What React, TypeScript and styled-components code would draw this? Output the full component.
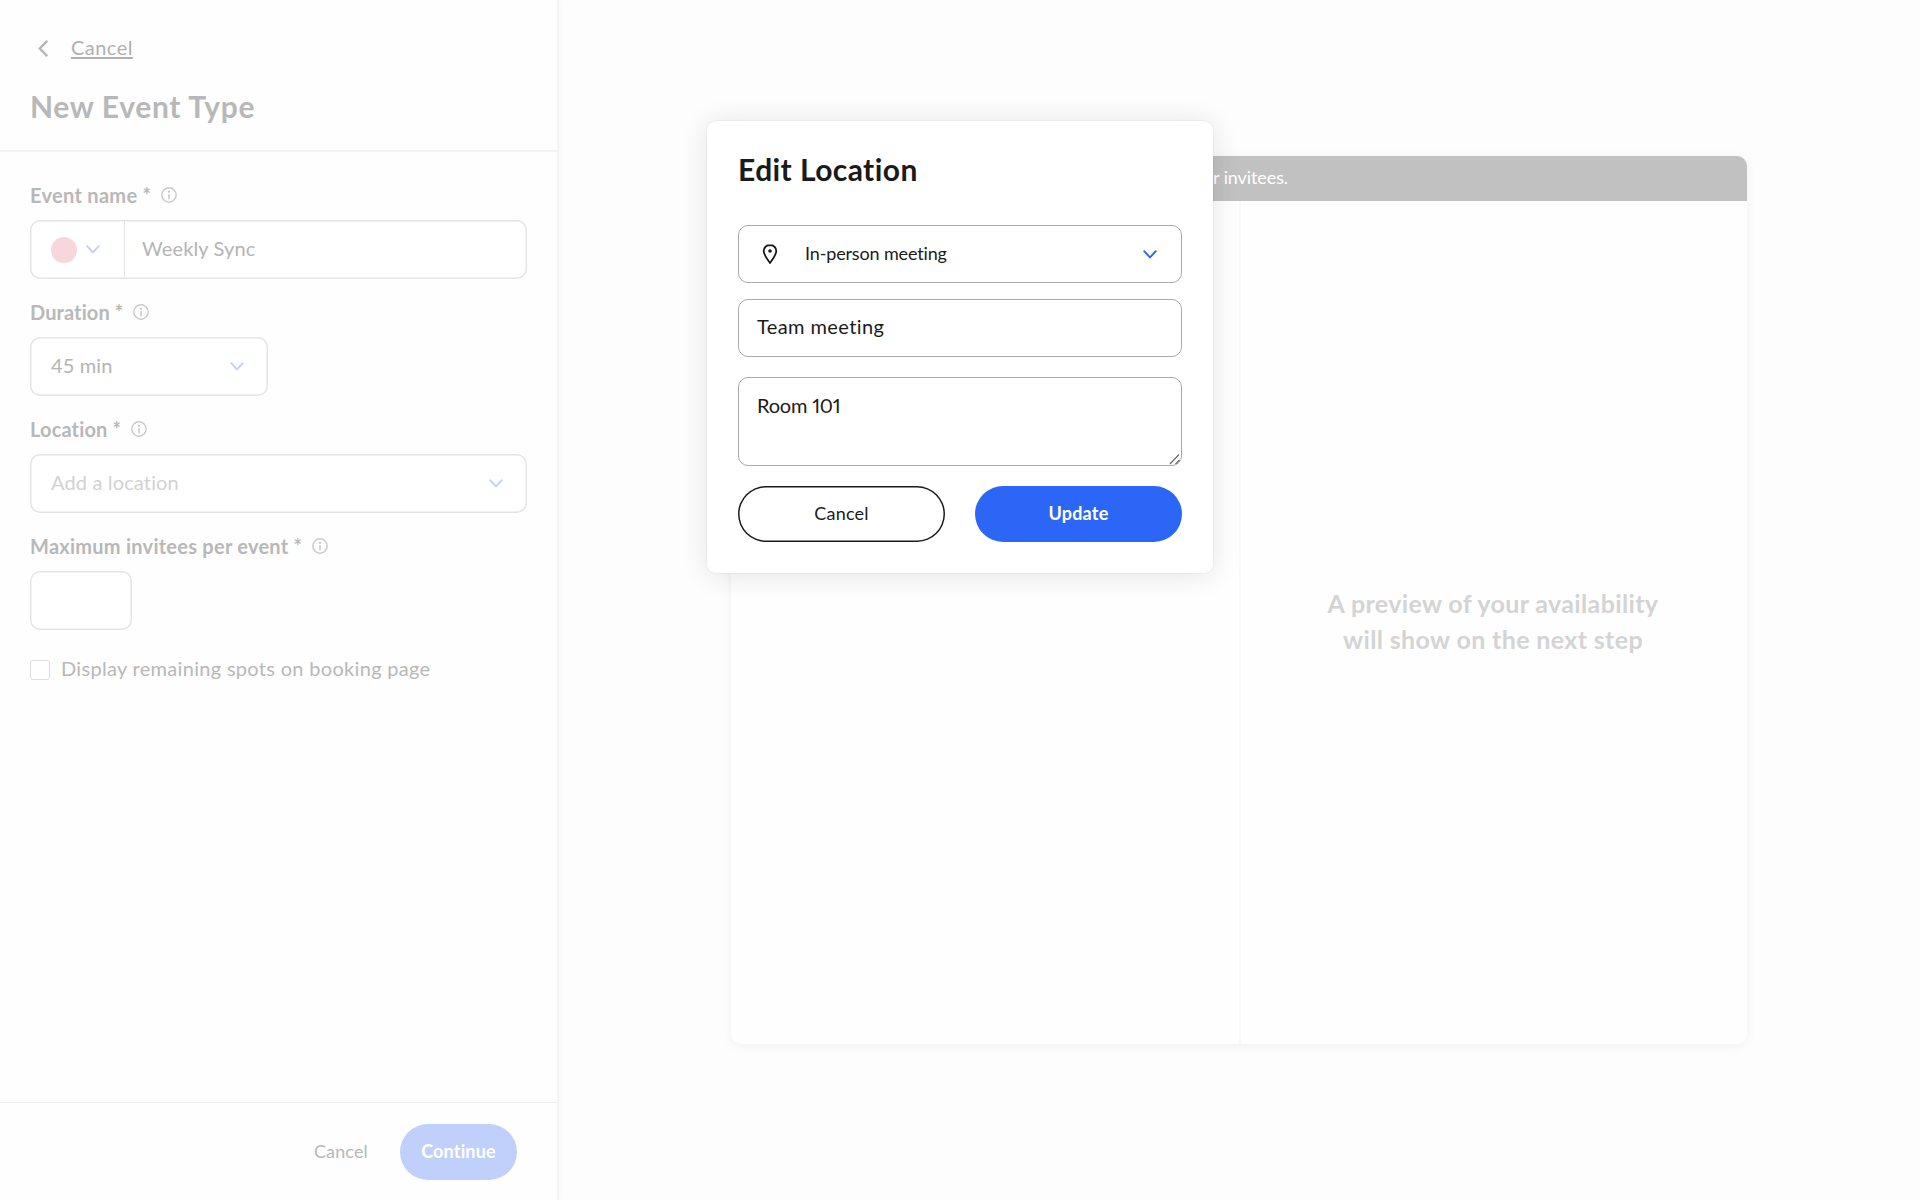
import React from 'react'
import styled, { createGlobalStyle, ThemeProvider } from 'styled-components'

const theme = {
  colors: {
    text: '#1a1a1a',
    primary: '#2b66f6',
    primaryFaded: '#c1cffb',
    faded: '#b8b8b8',
    fadedBorder: '#e4e4e4',
    line: '#f3f3f3',
    border: '#a9a9a9',
    canvas: '#fdfdfd',
  },
  radius: '10px',
}

const GlobalStyle = createGlobalStyle`
  * {
    box-sizing: border-box;
  }

  body {
    margin: 0;
    background: ${theme.colors.canvas};
    font-family: Lato, 'Open Sans', sans-serif;
    font-size: 20px;
    line-height: 24px;
    color: ${theme.colors.text};
    overflow: hidden;
  }
`

const Page = styled.div`
  position: relative;
  display: flex;
  width: 1920px;
  height: 1200px;
  overflow: hidden;
`

/* ---------- sidebar ---------- */

const Sidebar = styled.aside`
  display: flex;
  flex-direction: column;
  width: 559px;
  flex: none;
  background: #fefefe;
  border-right: 2px solid #f3f3f3;
  box-shadow: 3px 0 5px rgba(0, 0, 0, 0.02);
  color: ${(props) => props.theme.colors.faded};
`

const SidebarHeader = styled.header`
  height: 152px;
  padding: 35px 30px 0;
  border-bottom: 2px solid ${(props) => props.theme.colors.line};
`

const BackRow = styled.div`
  display: flex;
  align-items: center;
  gap: 23px;
  padding-left: 8px;
`

const BackLink = styled.a`
  color: #b0b0b0;
  letter-spacing: 0.45px;
  text-decoration: underline;
  text-decoration-thickness: 1.5px;
  text-underline-offset: 2px;
`

const Title = styled.h1`
  margin: 29px 0 0;
  font-size: 30px;
  line-height: 36px;
  font-weight: 700;
  letter-spacing: 0.66px;
`

const Form = styled.form`
  flex: 1;
  padding: 31px 30px 0;
`

const Field = styled.div`
  margin-bottom: 20px;
`

const LabelRow = styled.div`
  display: flex;
  align-items: center;
  height: 24px;
  margin-bottom: 13px;
  padding-bottom: 0;
`

const Label = styled.label<{ $spacing?: number }>`
  font-weight: 700;
  letter-spacing: ${(props) => props.$spacing ?? 0.3}px;
  margin-right: 10px;
  white-space: nowrap;
`

const FormBox = styled.div<{ $width?: number }>`
  display: flex;
  align-items: center;
  width: ${(props) => props.$width ?? 497}px;
  height: 59px;
  margin-bottom: 21px;
  border-radius: ${(props) => props.theme.radius};
  background: #fff;
  box-shadow: inset 0 0 0 1.5px ${(props) => props.theme.colors.fadedBorder};
`

const ColorPicker = styled.div`
  display: flex;
  align-items: center;
  gap: 9px;
  width: 95px;
  height: 100%;
  padding-left: 21px;
  border-right: 1px solid ${(props) => props.theme.colors.fadedBorder};
`

const ColorDot = styled.span`
  width: 26px;
  height: 26px;
  border-radius: 50%;
  background: #f9d5dc;
`

const FormValue = styled.span<{ $placeholder?: boolean; $indent: number }>`
  flex: 1;
  padding-left: ${(props) => props.$indent}px;
  padding-bottom: 3px;
  letter-spacing: 0.15px;
  color: ${(props) => (props.$placeholder ? '#d2d2d2' : '#b4b4b4')};
`

const ChevronSlot = styled.span<{ $right: number }>`
  display: flex;
  margin-right: ${(props) => props.$right}px;
`

const CheckRow = styled.label`
  display: flex;
  align-items: center;
  gap: 11px;
  padding-top: 5px;
  letter-spacing: 0.31px;
`

const CheckBox = styled.span`
  width: 20px;
  height: 20px;
  margin-top: 3px;
  border: 1px solid #dedede;
  border-radius: 3px;
  background: #fff;
`

const SidebarFooter = styled.footer`
  display: flex;
  align-items: center;
  justify-content: flex-end;
  gap: 32px;
  height: 98px;
  padding: 0 40px 0 0;
  border-top: 1px solid #ededed;
  font-size: 18px;
`

const FooterCancel = styled.span`
  padding-bottom: 2px;
  letter-spacing: 0.15px;
`

const ContinueButton = styled.button`
  width: 117px;
  height: 56px;
  padding: 0 0 2px;
  border: 0;
  border-radius: 28px;
  background: ${(props) => props.theme.colors.primaryFaded};
  color: #fff;
  font: 700 18px/24px Lato, sans-serif;
  letter-spacing: 0.15px;
`

/* ---------- preview ---------- */

const Main = styled.main`
  flex: 1;
  padding: 156px 0 0 172px;
`

const PreviewCard = styled.section`
  display: flex;
  flex-direction: column;
  width: 1016px;
  height: 888px;
  border-radius: ${(props) => props.theme.radius};
  background: #fefefe;
  box-shadow: 0 2px 12px rgba(0, 0, 0, 0.05);
  overflow: hidden;
`

const Banner = styled.div`
  display: flex;
  justify-content: flex-end;
  height: 45px;
  padding: 9px 459px 0 0;
  background: #c1c1c1;
  color: #fff;
  font-size: 18px;
  letter-spacing: -0.1px;
`

const PreviewBody = styled.div`
  flex: 1;
  display: grid;
  grid-template-columns: 508px 1fr;
`

const AvailabilityPane = styled.div`
  grid-column: 2;
  border-left: 2px solid #f9f9f9;
  padding: 384px 2px 0 0;
  text-align: center;
  font-size: 25px;
  line-height: 36px;
  font-weight: 700;
  letter-spacing: 0.36px;
  color: #d4d4d4;
`

/* ---------- modal ---------- */

const Modal = styled.div`
  position: absolute;
  top: 121px;
  left: 707px;
  width: 506px;
  height: 452px;
  padding: 30px 31px 0;
  border-radius: 9px;
  background: #fff;
  box-shadow:
    0 0 1px 1px rgba(0, 0, 0, 0.03),
    0 2px 28px rgba(0, 0, 0, 0.11);
`

const ModalTitle = styled.h2`
  margin: 0 0 38px;
  font-size: 30px;
  line-height: 36px;
  font-weight: 700;
  letter-spacing: 0.42px;
`

const ModalBox = styled.div<{ $mb: number }>`
  display: flex;
  align-items: center;
  width: 444px;
  height: 58px;
  margin-bottom: ${(props) => props.$mb}px;
  border: 1px solid ${(props) => props.theme.colors.border};
  border-radius: ${(props) => props.theme.radius};
`

const PinSlot = styled.span`
  display: flex;
  width: 66px;
  padding-left: 23px;
`

const SelectText = styled.span`
  flex: 1;
  padding-bottom: 3px;
  font-size: 18px;
  letter-spacing: -0.15px;
`

const InputText = styled.span`
  padding: 0 0 4px 18px;
  letter-spacing: 0.4px;
`

const NoteArea = styled.div`
  position: relative;
  width: 444px;
  height: 89px;
  margin-bottom: 20px;
  padding: 15px 18px;
  border: 1px solid ${(props) => props.theme.colors.border};
  border-radius: ${(props) => props.theme.radius};
  font-variant-numeric: proportional-nums;
  letter-spacing: -0.2px;
`

const Grip = styled.svg`
  position: absolute;
  right: 0;
  bottom: 0;
`

const Actions = styled.div`
  display: grid;
  grid-template-columns: 1fr 1fr;
  gap: 30px;
  width: 444px;
`

const ActionButton = styled.button<{ $primary?: boolean }>`
  height: 56px;
  padding: 0 0 2px;
  border: 0;
  border-radius: 28px;
  background: ${(props) => (props.$primary ? props.theme.colors.primary : '#fff')};
  box-shadow: ${(props) =>
    props.$primary ? 'none' : `inset 0 0 0 1.5px ${props.theme.colors.text}`};
  color: ${(props) => (props.$primary ? '#fff' : props.theme.colors.text)};
  font: ${(props) => (props.$primary ? 700 : 400)} 18px/24px Lato, sans-serif;
  letter-spacing: 0.2px;
`

interface ChevronProps {
  color: string
}

const Chevron: React.FC<ChevronProps> = ({ color }) => (
  <svg width="14" height="9" viewBox="0 0 14 9" fill="none" aria-hidden="true">
    <path
      d="M1.2 1.2 7 7.4l5.800-6.200"
      stroke={color}
      strokeWidth="1.9"
      strokeLinecap="round"
      strokeLinejoin="round"
    />
  </svg>
)

const BackIcon = () => (
  <svg width="10" height="20" viewBox="0 0 10 20" fill="none" aria-hidden="true">
    <path d="M9.200 3.800 1.700 11.500l7.500 7.700" stroke="#b5b5b5" strokeWidth="2.3" />
  </svg>
)

const InfoIcon = () => (
  <svg width="16" height="16" viewBox="0 0 16 16" fill="none" aria-hidden="true">
    <circle cx="8" cy="8" r="7.200" stroke="#cbcbcb" strokeWidth="1.500" />
    <circle cx="8" cy="4.800" r="1.100" fill="#c4c4c4" />
    <path d="M8 7.200v5" stroke="#c4c4c4" strokeWidth="1.500" />
  </svg>
)

const PinIcon = () => (
  <svg width="16" height="22" viewBox="0 0 16 22" fill="none" aria-hidden="true">
    <path
      d="M8 2c-3.600 0-6.300 2.600-6.300 6.100 0 3.700 4.200 9 6.300 12 2.100-3 6.300-8.300 6.300-12C14.300 4.600 11.600 2 8 2Z"
      stroke="#1a1a1a"
      strokeWidth="1.8"
      strokeLinejoin="round"
    />
    <circle cx="8" cy="8" r="1.8" fill="#1a1a1a" />
  </svg>
)

interface FormLabelProps {
  text: string
  spacing?: number
}

const FormLabel: React.FC<FormLabelProps> = ({ text, spacing }) => (
  <LabelRow>
    <Label $spacing={spacing}>{text} *</Label>
    <InfoIcon />
  </LabelRow>
)

const EventSidebar = () => (
  <Sidebar>
    <SidebarHeader>
      <BackRow>
        <BackIcon />
        <BackLink>Cancel</BackLink>
      </BackRow>
      <Title>New Event Type</Title>
    </SidebarHeader>

    <Form>
      <Field>
        <FormLabel text="Event name" />
        <FormBox>
          <ColorPicker>
            <ColorDot />
            <Chevron color={theme.colors.primaryFaded} />
          </ColorPicker>
          <FormValue $indent={17}>Weekly Sync</FormValue>
        </FormBox>
      </Field>
      <Field>
        <FormLabel text="Duration" spacing={0.1} />
        <FormBox $width={238}>
          <FormValue $indent={21}>45 min</FormValue>
          <ChevronSlot $right={24}>
            <Chevron color={theme.colors.primaryFaded} />
          </ChevronSlot>
        </FormBox>
      </Field>
      <Field>
        <FormLabel text="Location" spacing={0.15} />
        <FormBox>
          <FormValue $indent={21} $placeholder>
            Add a location
          </FormValue>
          <ChevronSlot $right={24}>
            <Chevron color={theme.colors.primaryFaded} />
          </ChevronSlot>
        </FormBox>
      </Field>
      <Field>
        <FormLabel text="Maximum invitees per event" spacing={0.25} />
        <FormBox $width={102} />
      </Field>
      <CheckRow>
        <CheckBox />
        Display remaining spots on booking page
      </CheckRow>
    </Form>

    <SidebarFooter>
      <FooterCancel>Cancel</FooterCancel>
      <ContinueButton>Continue</ContinueButton>
    </SidebarFooter>
  </Sidebar>
)

const BookingPreview = () => (
  <Main>
    <PreviewCard>
      <Banner>r invitees.</Banner>
      <PreviewBody>
        <AvailabilityPane>
          A preview of your availability
          <br />
          will show on the next step
        </AvailabilityPane>
      </PreviewBody>
    </PreviewCard>
  </Main>
)

const LocationModal = () => (
  <Modal role="dialog" aria-label="Edit Location">
    <ModalTitle>Edit Location</ModalTitle>
    <ModalBox $mb={16}>
      <PinSlot>
        <PinIcon />
      </PinSlot>
      <SelectText>In-person meeting</SelectText>
      <ChevronSlot $right={24}>
        <Chevron color={theme.colors.primary} />
      </ChevronSlot>
    </ModalBox>
    <ModalBox $mb={20}>
      <InputText>Team meeting</InputText>
    </ModalBox>
    <NoteArea>
      Room 101
      <Grip width="12" height="12" viewBox="0 0 12 12" aria-hidden="true">
        <path d="M1 11 10 1.500M6.500 11 10.500 7" stroke="#6b6b6b" strokeWidth="1.2" />
      </Grip>
    </NoteArea>
    <Actions>
      <ActionButton>Cancel</ActionButton>
      <ActionButton $primary>Update</ActionButton>
    </Actions>
  </Modal>
)

const App: React.FC = () => {
  return (
    <ThemeProvider theme={theme}>
      <GlobalStyle />
      <Page>
        <EventSidebar />
        <BookingPreview />
        <LocationModal />
      </Page>
    </ThemeProvider>
  )
}

export default App
